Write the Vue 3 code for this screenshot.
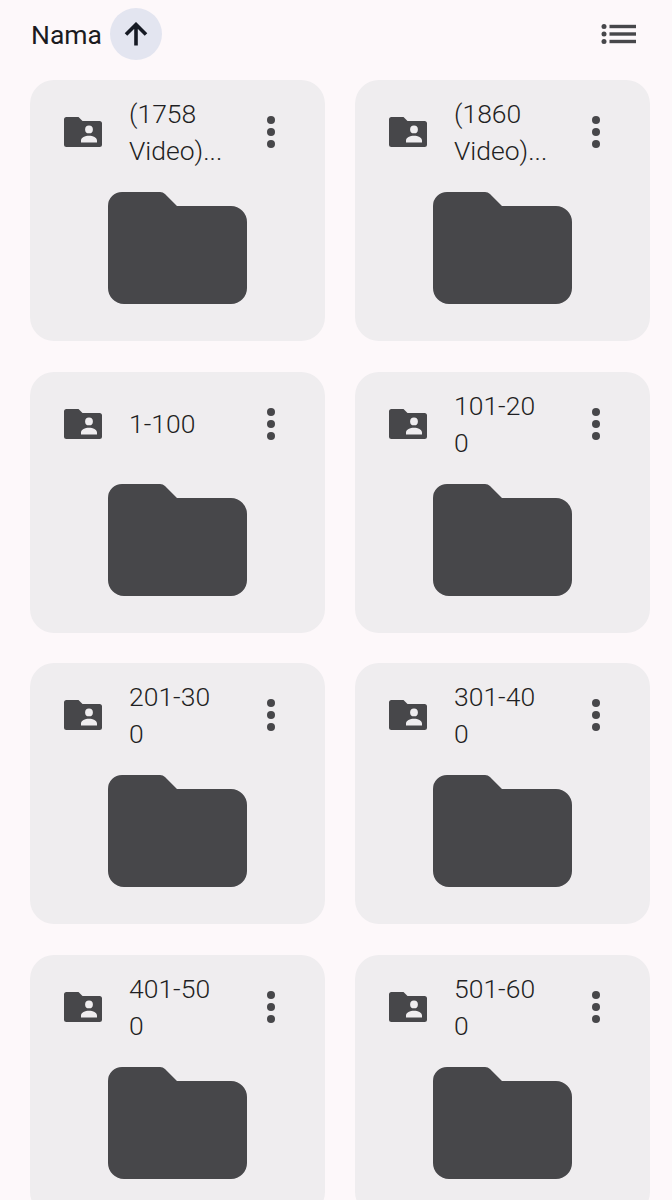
<template>
  <div class="page">
    <header class="sort-bar">
      <div class="sort-left">
        <span class="sort-label">Nama</span>
        <button class="sort-btn" aria-label="Urutkan">
          <svg viewBox="0 0 26 24" width="26" height="24" fill="none">
            <path d="M13 23.500V2.500M3 12.500L13 2.500l10 10" stroke="currentColor" stroke-width="3.600" />
          </svg>
        </button>
      </div>
      <button class="view-btn" aria-label="Tampilan daftar">
        <svg viewBox="0 0 36 20" width="36" height="20">
          <circle cx="3" cy="2.500" r="2.500" />
          <circle cx="3" cy="10" r="2.500" />
          <circle cx="3" cy="17.500" r="2.500" />
          <rect x="8.500" y="0.800" width="26.500" height="3.400" />
          <rect x="8.500" y="8.300" width="26.500" height="3.400" />
          <rect x="8.500" y="15.800" width="26.500" height="3.400" />
        </svg>
      </button>
    </header>

    <div class="grid">
      <article v-for="folder in folders" :key="folder" class="card">
        <div class="card-head">
          <svg class="shared-icon" viewBox="0 0 38 30" width="38" height="30">
            <path
              fill-rule="evenodd"
              d="M2.500 0H14.500L18.500 4H35.500A2.500 2.500 0 0 1 38 6.500V27.500A2.500 2.500 0 0 1 35.500 30H2.500A2.500 2.500 0 0 1 0 27.500V2.500A2.500 2.500 0 0 1 2.500 0ZM25 8.500A3.900 3.900 0 1 0 25 16.300A3.900 3.900 0 0 0 25 8.500ZM17 25.500H33V23.500C33 20.500 29 18.800 25 18.800C21 18.800 17 20.500 17 23.500Z"
            />
          </svg>
          <div class="card-title">{{ folder }}</div>
          <button class="more-btn" aria-label="Menu">
            <span></span><span></span><span></span>
          </button>
        </div>
        <div class="card-thumb">
          <svg viewBox="0 0 139 112" width="139" height="112">
            <path d="M14 0H52Q55 0 57 2L69 14H123A16 16 0 0 1 139 30V96A16 16 0 0 1 123 112H16A16 16 0 0 1 0 96V14A14 14 0 0 1 14 0Z" />
          </svg>
        </div>
      </article>
    </div>
  </div>
</template>

<script setup>
// line breaks follow the narrow title column of the card
const folders = [
  "(1758\nVideo)...",
  "(1860\nVideo)...",
  "1-100",
  "101-20\n0",
  "201-30\n0",
  "301-40\n0",
  "401-50\n0",
  "501-60\n0",
];
</script>

<style>
html,
body {
  margin: 0;
  background: #fdf8fa;
}
</style>

<style scoped>
.page {
  height: 1200px;
  overflow: hidden;
  background: #fdf8fa;
  font-family: Roboto, "Noto Sans", sans-serif;
}

.sort-bar {
  height: 80px;
  box-sizing: border-box;
  padding: 8px 35px 12px 31px;
  display: flex;
  align-items: flex-start;
  justify-content: space-between;
}

.sort-left {
  display: flex;
  align-items: center;
  gap: 8px;
}

.sort-label {
  font-size: 26.500px;
  color: #1b1b1f;
}

.sort-btn {
  width: 52px;
  height: 52px;
  padding: 0;
  border: none;
  border-radius: 50%;
  background: #e3e5f0;
  color: #161a24;
  display: flex;
  align-items: center;
  justify-content: center;
}

.view-btn {
  width: 36px;
  height: 52px;
  padding: 0;
  border: none;
  background: none;
  fill: #47474a;
  display: flex;
  align-items: center;
}

.grid {
  display: grid;
  grid-template-columns: 295px 295px;
  grid-auto-rows: 261px;
  gap: 30.700px 30px;
  padding-left: 30px;
}

.card {
  background: #efedef;
  border-radius: 24px;
  padding: 15px 0 0 34px;
  box-sizing: border-box;
}

.card-head {
  height: 74px;
  display: flex;
  align-items: center;
}

.shared-icon {
  flex: none;
  fill: #47474a;
}

.card-title {
  flex: none;
  width: 111px;
  margin-left: 27px;
  font-size: 26.500px;
  font-weight: 300;
  line-height: 37px;
  color: #1f1f23;
  white-space: pre;
}

.more-btn {
  margin-left: 27px;
  width: 8px;
  padding: 0;
  border: none;
  background: none;
  display: flex;
  flex-direction: column;
  gap: 4px;
}

.more-btn span {
  width: 8px;
  height: 8px;
  border-radius: 50%;
  background: #47474a;
}

.card-thumb {
  margin: 23px 0 0 44px;
  fill: #47474a;
  line-height: 0;
}
</style>
